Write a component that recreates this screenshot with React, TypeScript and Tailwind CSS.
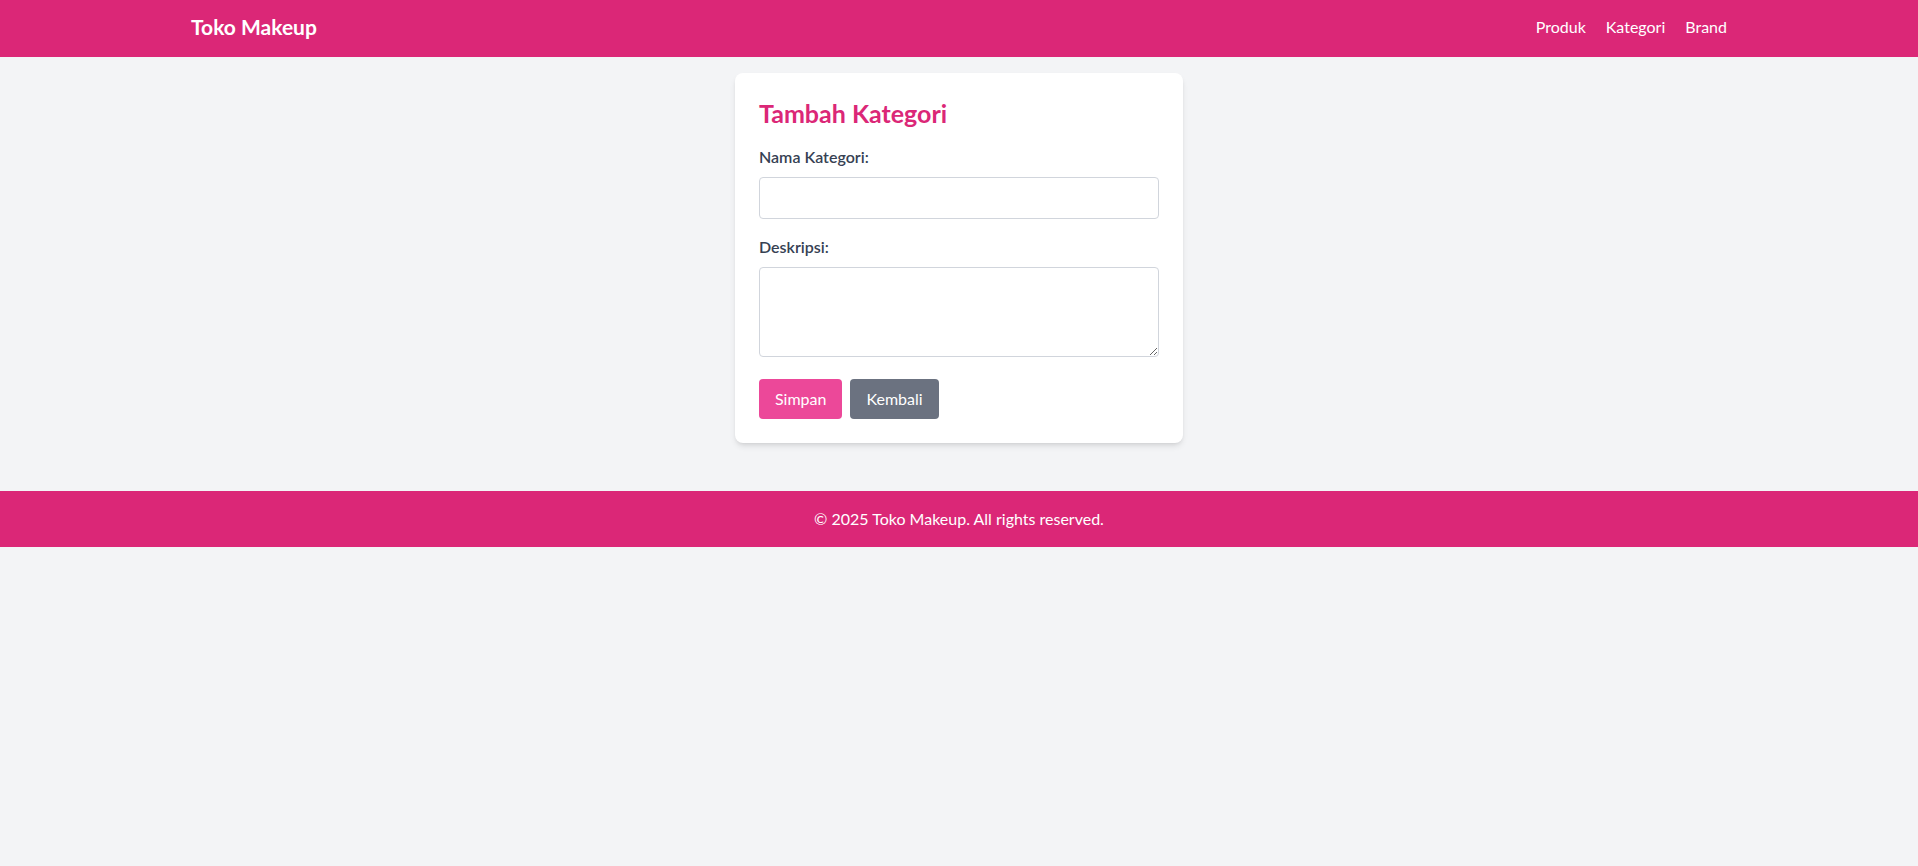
import React from "react";

export default function App() {
  return (
    <div className="min-h-screen bg-[#f3f4f6] font-['Lato',sans-serif]">
      <nav className="bg-[#db2777] h-[57px] pb-[3px] text-white">
        <div className="mx-auto max-w-[1536px] h-full flex items-center justify-between">
          <span className="text-[21px] leading-7 font-bold">Toko Makeup</span>
          <div className="flex gap-5 text-base">
            <a>Produk</a>
            <a>Kategori</a>
            <a>Brand</a>
          </div>
        </div>
      </nav>
      <main className="p-4">
        <div className="mx-auto w-[448px] bg-white rounded-lg shadow-md p-6">
          <h1 className="text-[25px] leading-8 font-bold text-[#db2777] mb-4">Tambah Kategori</h1>
          <div className="mb-4">
            <label className="block font-semibold text-gray-700 mb-2">Nama Kategori:</label>
            <input className="w-full border border-gray-300 rounded px-3 py-2" />
          </div>
          <div className="mb-4">
            <label className="block font-semibold text-gray-700 mb-2">Deskripsi:</label>
            <textarea rows={3} className="w-full border border-gray-300 rounded px-3 py-2" />
          </div>
          <div className="flex gap-2">
            <button className="bg-[#ec4899] text-white px-4 py-2 rounded">Simpan</button>
            <button className="bg-[#6b7280] text-white px-4 py-2 rounded">Kembali</button>
          </div>
        </div>
      </main>
      <footer className="bg-[#db2777] text-white text-center py-4 mt-8">
        © 2025 Toko Makeup. All rights reserved.
      </footer>
    </div>
  );
}
